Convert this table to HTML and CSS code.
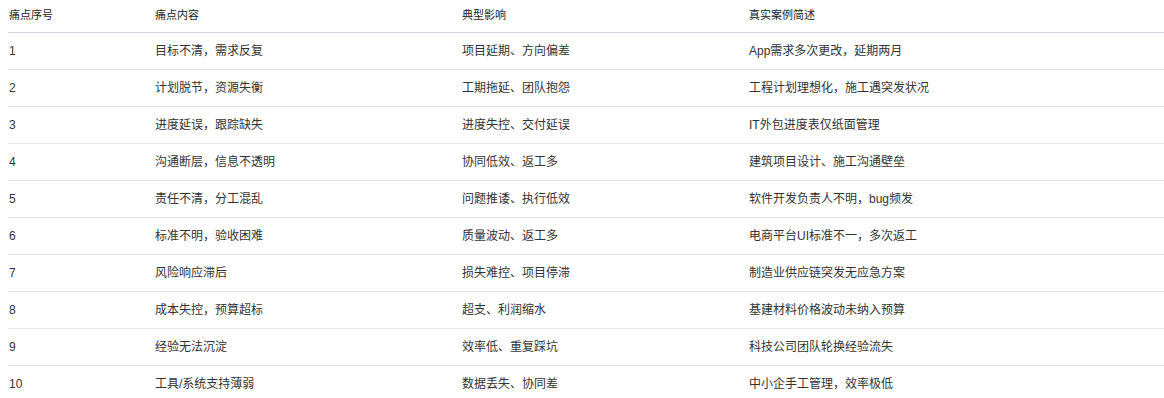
FILE: index.html
```html
<!DOCTYPE html>
<html lang="zh">
<head>
<meta charset="utf-8">
<link rel="stylesheet" href="styles.css">
</head>
<body>
<table class="grid">
  <colgroup>
    <col class="c1"><col class="c2"><col class="c3"><col class="c4">
  </colgroup>
  <thead>
    <tr><th>痛点序号</th><th>痛点内容</th><th>典型影响</th><th>真实案例简述</th></tr>
  </thead>
  <tbody>
    <tr><td>1</td><td>目标不清，需求反复</td><td>项目延期、方向偏差</td><td>App需求多次更改，延期两月</td></tr>
    <tr><td>2</td><td>计划脱节，资源失衡</td><td>工期拖延、团队抱怨</td><td>工程计划理想化，施工遇突发状况</td></tr>
    <tr><td>3</td><td>进度延误，跟踪缺失</td><td>进度失控、交付延误</td><td>IT外包进度表仅纸面管理</td></tr>
    <tr><td>4</td><td>沟通断层，信息不透明</td><td>协同低效、返工多</td><td>建筑项目设计、施工沟通壁垒</td></tr>
    <tr><td>5</td><td>责任不清，分工混乱</td><td>问题推诿、执行低效</td><td>软件开发负责人不明，bug频发</td></tr>
    <tr><td>6</td><td>标准不明，验收困难</td><td>质量波动、返工多</td><td>电商平台UI标准不一，多次返工</td></tr>
    <tr><td>7</td><td>风险响应滞后</td><td>损失难控、项目停滞</td><td>制造业供应链突发无应急方案</td></tr>
    <tr><td>8</td><td>成本失控，预算超标</td><td>超支、利润缩水</td><td>基建材料价格波动未纳入预算</td></tr>
    <tr><td>9</td><td>经验无法沉淀</td><td>效率低、重复踩坑</td><td>科技公司团队轮换经验流失</td></tr>
    <tr><td>10</td><td>工具/系统支持薄弱</td><td>数据丢失、协同差</td><td>中小企手工管理，效率极低</td></tr>
  </tbody>
</table>
</body>
</html>
```
FILE: styles.css
```css
html, body {
  margin: 0;
  padding: 0;
  background: #fff;
}
body {
  padding-left: 8px;
  font-family: "Liberation Sans", "Noto Sans CJK SC", sans-serif;
  color: #333;
}
.grid {
  width: 1156px;
  border-collapse: collapse;
  table-layout: fixed;
}
.c1 { width: 139px; }
.c2 { width: 307px; }
.c3 { width: 287px; }
.c4 { width: auto; }
.grid th {
  text-align: left;
  font-size: 11px;
  font-weight: 400;
  color: #222;
  height: 32px;
  padding: 0 8px 2px 1px;
  line-height: 14px;
  border-bottom: 1px solid #d3d3dc;
  box-sizing: border-box;
}
.grid td {
  font-size: 12px;
  line-height: 16px;
  height: 37px;
  padding: 0 8px 0 1px;
  border-bottom: 1px solid #e6e6e6;
  box-sizing: border-box;
  color: #333;
}
.grid th + th, .grid td + td {
  padding-left: 8px;
}
```
